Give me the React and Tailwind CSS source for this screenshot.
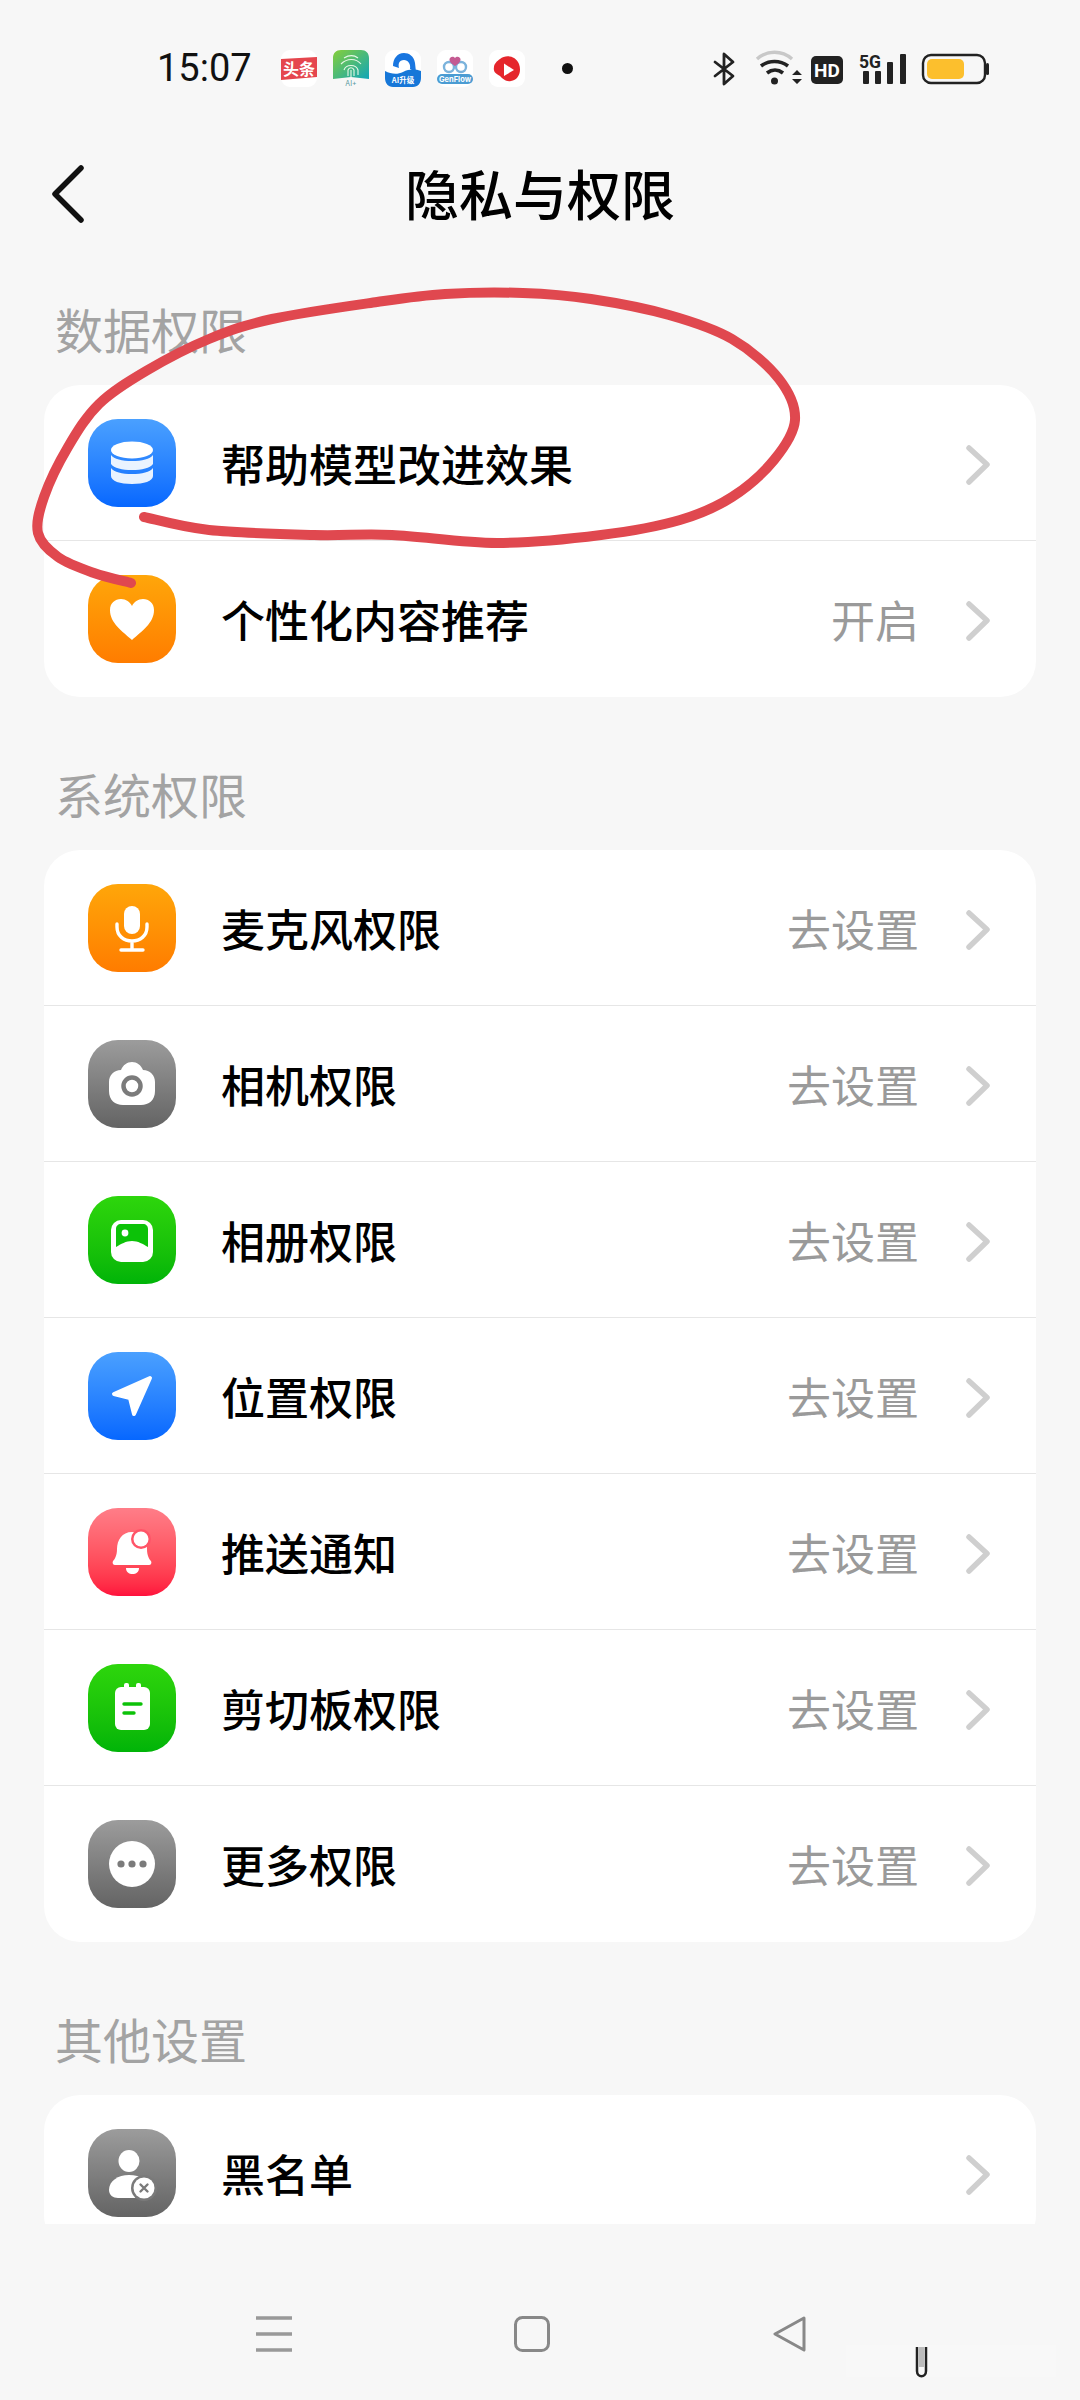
import React from 'react';

const FONT = '"Noto Sans CJK SC", "Noto Sans", sans-serif';

// hand drawn red ring over the first card
const RING = [[144,517],[209,530],[314,535],[392,535],[497,543],[601,535],[680,520],[732,497],[774,460],[795,420],[779,379],[732,339],[669,315],[591,299],[523,293],[445,294],[377,302],[272,319],[209,339],[146,371],[99,404],[68,447],[44,497],[38,533],[58,557],[94,573],[131,583]];

function smoothPath(pts) {
  let d = `M${pts[0][0]} ${pts[0][1]}`;
  for (let i = 0; i < pts.length - 1; i++) {
    const p0 = pts[i - 1] || pts[i];
    const p1 = pts[i];
    const p2 = pts[i + 1];
    const p3 = pts[i + 2] || p2;
    d += ` C${p1[0] + (p2[0] - p0[0]) / 6} ${p1[1] + (p2[1] - p0[1]) / 6} ${p2[0] - (p3[0] - p1[0]) / 6} ${p2[1] - (p3[1] - p1[1]) / 6} ${p2[0]} ${p2[1]}`;
  }
  return d;
}

const BLUE = 'bg-linear-to-b from-[#4aa0ff] to-[#0667ff]';
const ORANGE = 'bg-linear-to-b from-[#ffa60a] to-[#ff7c00]';
const GRAY = 'bg-linear-to-b from-[#9c9c9c] to-[#646464]';
const GREEN = 'bg-linear-to-b from-[#2dd60c] to-[#00b408]';
const RED = 'bg-linear-to-b from-[#ff7d88] to-[#ff0f3c]';

const icons = {
  database: (
    <>
      <path d="M23 49c3 4 11 6 21 6s18-2 21-6v8c0 5-9 8-21 8s-21-3-21-8z" fill="#fff" opacity=".9" />
      <path d="M23 36c3 4 11 6 21 6s18-2 21-6v9c-3 4-11 6-21 6s-18-2-21-6z" fill="#fff" opacity=".9" />
      <ellipse cx="44" cy="31" rx="21" ry="8.5" fill="#fff" />
    </>
  ),
  heart: <path d="M44 65C34 56 22 48 22 35c0-7 5-11 11-11 5 0 9 3 11 7 2-4 6-7 11-7 6 0 11 4 11 11 0 13-12 21-22 30z" fill="#fff" />,
  mic: (
    <g fill="none" stroke="#fff">
      <rect x="36" y="22" width="16" height="28" rx="8" fill="#fff" stroke="none" />
      <path d="M29 40v3c0 9 7 14 15 14s15-5 15-14v-3M44 57v9M33 66h22" strokeWidth="3.4" strokeLinecap="round" />
    </g>
  ),
  camera: (
    <>
      <path d="M33 30c2-5 6-8 11-8s9 3 11 8c7 0 12 5 12 12v9c0 9-6 14-14 14H35c-8 0-14-5-14-14v-9c0-7 5-12 12-12z" fill="#fff" />
      <circle cx="44" cy="46" r="8.5" fill="none" stroke="#7b7b7b" strokeWidth="4.5" />
    </>
  ),
  photo: (
    <>
      <rect x="23" y="24" width="42" height="42" rx="10" fill="#fff" />
      <path d="M28 33c0-3 2-5 5-5h22c3 0 5 2 5 5v18c-5-3-10-6-16-6s-11 3-16 6z" fill="#0cc208" />
      <circle cx="37" cy="37" r="3.4" fill="#fff" />
    </>
  ),
  location: <path d="M62 26 26 42l16 4 4 16z" fill="#fff" stroke="#fff" strokeWidth="4" strokeLinejoin="round" />,
  bell: (
    <>
      <path d="M44 24c-10 0-15 8-15 17 0 6-2 10-4 12-1 2 0 4 2 4h34c2 0 3-2 2-4-2-2-4-6-4-12 0-9-5-17-15-17z" fill="#fff" />
      <path d="M38 60h13c0 4-3 6-6.500 6S38 64 38 60z" fill="#fff" />
      <circle cx="53" cy="31" r="10" fill="#ff5468" />
      <circle cx="53" cy="31" r="7.500" fill="#fff" />
    </>
  ),
  clipboard: (
    <>
      <rect x="27" y="23" width="35" height="43" rx="6" fill="#fff" />
      <rect x="36" y="19" width="5" height="8" rx="2" fill="#fff" />
      <rect x="48" y="19" width="5" height="8" rx="2" fill="#fff" />
      <path d="M36 40h17M36 49h10" stroke="#0cc208" strokeWidth="3.400" strokeLinecap="round" />
    </>
  ),
  more: (
    <>
      <circle cx="44" cy="44" r="23" fill="#fff" />
      <circle cx="33" cy="44" r="3.600" fill="#7b7b7b" />
      <circle cx="44" cy="44" r="3.600" fill="#7b7b7b" />
      <circle cx="55" cy="44" r="3.600" fill="#7b7b7b" />
    </>
  ),
  block: (
    <>
      <ellipse cx="41" cy="32" rx="10.500" ry="11" fill="#fff" />
      <path d="M41 46c-11 0-20 6-20 15 0 5 4 8 9 8h20c6 0 11-4 11-11 0-7-8-12-20-12z" fill="#fff" />
      <circle cx="56" cy="59" r="13" fill="#7a7a7a" />
      <circle cx="56" cy="59" r="10.500" fill="#fff" />
      <path d="m52.500 55.500 7 7m0-7-7 7" stroke="#7a7a7a" strokeWidth="2.400" strokeLinecap="round" />
    </>
  ),
};

const SECTIONS = [
  {
    title: '数据权限',
    rows: [
      { icon: 'database', bg: BLUE, label: '帮助模型改进效果' },
      { icon: 'heart', bg: ORANGE, label: '个性化内容推荐', value: '开启' },
    ],
  },
  {
    title: '系统权限',
    rows: [
      { icon: 'mic', bg: ORANGE, label: '麦克风权限', value: '去设置' },
      { icon: 'camera', bg: GRAY, label: '相机权限', value: '去设置' },
      { icon: 'photo', bg: GREEN, label: '相册权限', value: '去设置' },
      { icon: 'location', bg: BLUE, label: '位置权限', value: '去设置' },
      { icon: 'bell', bg: RED, label: '推送通知', value: '去设置' },
      { icon: 'clipboard', bg: GREEN, label: '剪切板权限', value: '去设置' },
      { icon: 'more', bg: GRAY, label: '更多权限', value: '去设置' },
    ],
  },
  {
    title: '其他设置',
    rows: [{ icon: 'block', bg: GRAY, label: '黑名单' }],
  },
];

function StatusApps() {
  return (
    <div className="ml-[29px] flex gap-[16px]">
      <svg width="36" height="37" viewBox="0 0 36 37">
        <rect width="36" height="37" rx="9" fill="#fff" />
        <path d="M0 9 36 7v20L0 30z" fill="#e5464e" />
        <text x="18" y="25" textAnchor="middle" fontSize="16" fontWeight="700" fill="#fff" fontFamily={FONT}>头条</text>
      </svg>
      <svg width="36" height="37" viewBox="0 0 36 37">
        <defs>
          <linearGradient id="finger" x1="0" y1="0" x2="1" y2="1">
            <stop offset="0" stopColor="#86cf3a" />
            <stop offset="1" stopColor="#10a5b8" />
          </linearGradient>
        </defs>
        <path d="M0 8c0-5 3-8 8-8h20c5 0 8 3 8 8v21l-18-2-18 2z" fill="url(#finger)" />
        <path d="M11 8c5-3 10-3 14 0M8 14c6-6 15-6 20 0M11 20c2-6 12-6 14 0v5M15 26v-6c1-3 5-3 6 0v6M18 20v7" fill="none" stroke="#e8f8e8" strokeWidth="1.100" />
        <text x="18" y="35.500" textAnchor="middle" fontSize="7" fill="#5a9aa0" fontFamily="Inter, sans-serif">AI+</text>
      </svg>
      <svg width="36" height="37" viewBox="0 0 36 37">
        <rect width="36" height="37" rx="9" fill="#fff" />
        <path d="M8 16C8 9 12 3 19 3c5 0 10 3 11 10l1 9-6-3c1-5-2-9-6-9-5 0-6 4-5 8z" fill="#1976e0" />
        <path d="M0 21c6 3 12 4 18 1s12-3 18-1v7c0 5-3 9-8 9H8c-5 0-8-4-8-9z" fill="#1677d8" />
        <text x="18" y="33" textAnchor="middle" fontSize="7.500" fontWeight="700" fill="#fff" fontFamily={FONT}>AI升级</text>
      </svg>
      <svg width="36" height="37" viewBox="0 0 36 37">
        <rect width="36" height="37" rx="9" fill="#fff" />
        <circle cx="12" cy="17" r="5" fill="none" stroke="#7bb3dc" strokeWidth="2.400" />
        <circle cx="24" cy="17" r="5" fill="none" stroke="#7bb3dc" strokeWidth="2.400" />
        <path d="M13 8c2-2 4-1 5 0 1-1 3-2 5 0 2 3-2 6-5 8-3-2-7-5-5-8z" fill="#c45a92" />
        <rect y="24" width="36" height="10" rx="5" fill="#4b9cd3" />
        <text x="18" y="32" textAnchor="middle" fontSize="7.500" fontWeight="700" fill="#fff" fontFamily="Inter, sans-serif">GenFlow</text>
      </svg>
      <svg width="36" height="37" viewBox="0 0 36 37">
        <rect width="36" height="37" rx="9" fill="#fff" />
        <path d="M11 9c6-5 16-3 19 5 3 8-1 16-8 17-5 1-8-2-11-5-4-2-7-4-6-9 0-3 3-6 6-8z" fill="#e5262c" />
        <path d="M15 13.500 25 20l-10 6z" fill="#fff" />
      </svg>
    </div>
  );
}

function StatusIcons() {
  return (
    <svg width="280" height="40" viewBox="0 0 280 40" className="absolute left-[710px] top-[49px]">
      {/* bluetooth */}
      <path d="M5 13 23 27l-9 8V5l9 8L5 27" fill="none" stroke="#222" strokeWidth="2.800" strokeLinejoin="round" strokeLinecap="round" />
      {/* wifi */}
      <path d="M47 10c10-9 25-9 35 0" fill="none" stroke="#c8c8c8" strokeWidth="3.400" />
      <path d="M51 17c8-6 19-6 27 0M57 24c5-4 11-4 16 0" fill="none" stroke="#222" strokeWidth="3.600" />
      <circle cx="64.500" cy="32" r="3.500" fill="#222" />
      <path d="m82 26 5-5 5 5zM82 30l5 5 5-5z" fill="#222" />
      {/* hd */}
      <rect x="101" y="7" width="32" height="28" rx="5" fill="#222" />
      <text x="117" y="27.500" textAnchor="middle" fontSize="19" fontWeight="700" fill="#fff" fontFamily="Roboto, sans-serif">HD</text>
      {/* 5g signal */}
      <text x="149" y="19" fontSize="19" fontWeight="700" fill="#222" fontFamily="Roboto, sans-serif" textLength="22" lengthAdjust="spacingAndGlyphs">5G</text>
      <rect x="153" y="22" width="6" height="13" rx="1" fill="#222" />
      <rect x="165" y="22" width="6" height="13" rx="1" fill="#222" />
      <rect x="177" y="13" width="6" height="22" rx="1" fill="#222" />
      <rect x="190" y="5" width="6" height="30" rx="1" fill="#222" />
      {/* battery */}
      <rect x="213" y="6" width="62" height="28" rx="8" fill="none" stroke="#222" strokeWidth="2.400" />
      <rect x="217" y="10" width="37" height="20" rx="5" fill="#fcbf2d" />
      <rect x="276" y="14" width="3" height="12" rx="1.500" fill="#222" />
    </svg>
  );
}

function Chevron() {
  return (
    <svg width="24" height="40" viewBox="0 0 24 40" className="mt-[5px] shrink-0">
      <path d="M3 3 21 19.500 3 37" fill="none" stroke="#cfcfcf" strokeWidth="5.500" strokeLinecap="round" strokeLinejoin="round" />
    </svg>
  );
}

function Row({ row, last }) {
  return (
    <div className={`flex h-[156px] items-center pl-[44px] pr-[46px] ${last ? 'pb-[1px]' : 'border-b border-[#e6e6e6]'}`}>
      <div className={`h-[88px] w-[88px] shrink-0 rounded-[30px] ${row.bg}`}>
        <svg width="88" height="88" viewBox="0 0 88 88">{icons[row.icon]}</svg>
      </div>
      <span className="ml-[45px] flex-1 text-[44px] font-medium leading-none text-black">{row.label}</span>
      {row.value && <span className="mr-[47px] text-[44px] leading-none text-[#9a9a9a]">{row.value}</span>}
      <Chevron />
    </div>
  );
}

export default function App() {
  return (
    <div className="relative flex h-[2400px] w-[1080px] flex-col overflow-hidden bg-[#f7f7f7]" style={{ fontFamily: FONT }}>
      {/* Status bar */}
      <div className="flex h-[136px] shrink-0 items-center pl-[157px]">
        <span className="text-[38px] leading-none text-[#111]" style={{ fontFamily: 'Roboto, sans-serif' }}>15:07</span>
        <StatusApps />
        <span className="ml-[37px] h-[11px] w-[11px] rounded-full bg-[#111]"></span>
        <StatusIcons />
      </div>

      {/* Title */}
      <div className="relative flex h-[120px] shrink-0 items-center justify-center pb-[6px]">
        <svg width="36" height="60" viewBox="0 0 36 60" className="absolute left-[50px] top-[28px]">
          <path d="M31 4 5 30l26 26" fill="none" stroke="#111" strokeWidth="5.500" strokeLinecap="round" strokeLinejoin="round" />
        </svg>
        <h1 className="text-[54px] font-medium leading-none text-black">隐私与权限</h1>
      </div>

      {/* List */}
      <main className="h-[1968px] shrink-0 overflow-hidden pt-[25px]">
        {SECTIONS.map((section) => (
          <section key={section.title} className="mb-[49px] px-[44px]">
            <h2 className="flex h-[104px] items-center pb-[10px] pl-[11px] text-[48px] font-normal leading-none text-[#a3a3a3]">{section.title}</h2>
            <div className="overflow-hidden rounded-[36px] bg-white">
              {section.rows.map((row, i) => (
                <Row key={row.label} row={row} last={i === section.rows.length - 1} />
              ))}
            </div>
          </section>
        ))}
      </main>

      {/* Navigation bar */}
      <nav className="flex flex-1 items-start pl-[145px] pt-[92px]">
        <div className="flex w-[258px] justify-center">
          <svg width="36" height="36" viewBox="0 0 36 36">
            <path d="M0 2h36M0 18h36M0 34h36" stroke="#999" strokeWidth="3.400" />
          </svg>
        </div>
        <div className="flex w-[258px] justify-center">
          <svg width="36" height="36" viewBox="0 0 36 36">
            <rect x="1.500" y="1.500" width="33" height="33" rx="7" fill="none" stroke="#888" strokeWidth="3" />
          </svg>
        </div>
        <div className="flex w-[258px] justify-center">
          <svg width="36" height="36" viewBox="0 0 36 36">
            <path d="M32 2 3 18l29 16z" fill="none" stroke="#888" strokeWidth="3" strokeLinejoin="round" />
          </svg>
        </div>
      </nav>

      {/* Watermark smudge bottom right */}
      <svg width="220" height="40" viewBox="0 0 220 40" className="absolute left-[846px] top-[2342px]">
        <rect x="0" y="3" width="210" height="32" fill="#fff" opacity=".22" />
        <path d="M71 5v24c0 7 9 7 9 0V5" fill="none" stroke="#222" strokeWidth="2.500" />
        <rect x="73" y="5" width="5" height="20" fill="#bbb" />
      </svg>

      {/* Red marker ring */}
      <svg width="1080" height="2400" viewBox="0 0 1080 2400" className="pointer-events-none absolute inset-0">
        <path d={smoothPath(RING)} fill="none" stroke="#e0484f" strokeWidth="10" strokeLinecap="round" strokeLinejoin="round" />
      </svg>
    </div>
  );
}
